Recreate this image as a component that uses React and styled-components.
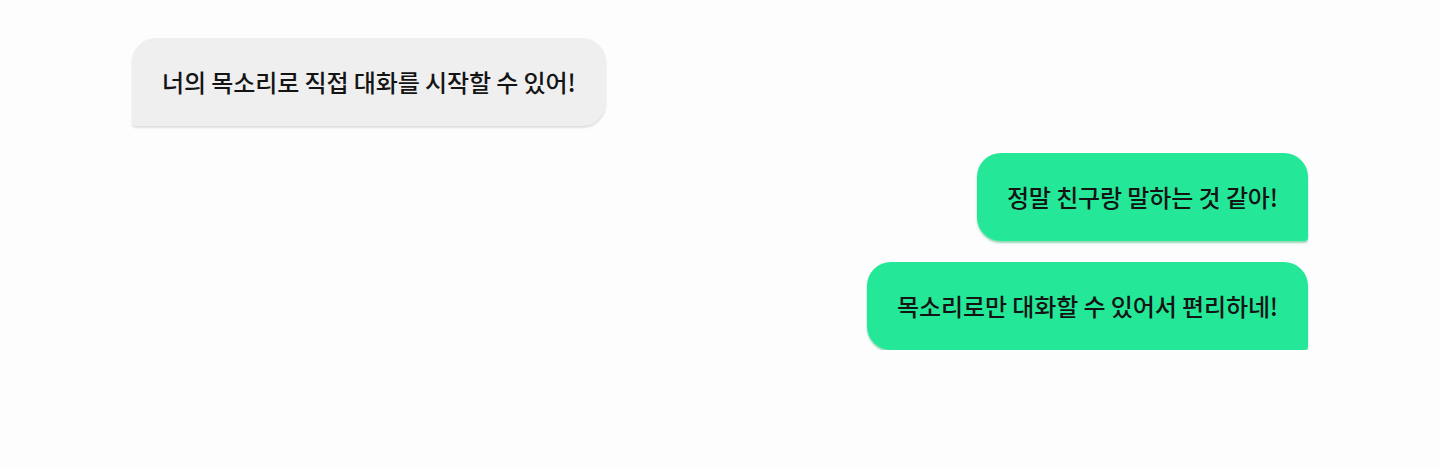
import React from "react";
import styled, { createGlobalStyle } from "styled-components";

const GlobalStyle = createGlobalStyle`
  html, body {
    margin: 0;
    padding: 0;
    background: #fdfdfd;
    font-family: "Noto Sans CJK KR", "Noto Sans", sans-serif;
  }
`;

const Chat = styled.div`
  width: 1176px;
  margin: 0 auto;
  padding-top: 38px;
  display: flex;
  flex-direction: column;
`;

const Row = styled.div`
  display: flex;
  justify-content: ${(props) => (props.mine ? "flex-end" : "flex-start")};
  margin-top: ${(props) => props.gap || 0}px;
`;

const Bubble = styled.div`
  box-sizing: border-box;
  height: 88px;
  padding: 0 30px 1px;
  display: flex;
  align-items: center;
  font-size: 24px;
  font-weight: 500;
  letter-spacing: -0.1px;
  color: #141414;
  background: ${(props) => (props.mine ? "#24e898" : "#efefef")};
  border-radius: ${(props) =>
    props.mine ? "24px 24px 4px 24px" : "24px 24px 24px 4px"};
  box-shadow: 0 2px 2px
    ${(props) => (props.mine ? "rgba(20, 170, 100, 0.45)" : "rgba(0, 0, 0, 0.12)")};
`;

const messages = [
  { text: "너의 목소리로 직접 대화를 시작할 수 있어!", mine: false, gap: 0 },
  { text: "정말 친구랑 말하는 것 같아!", mine: true, gap: 27 },
  { text: "목소리로만 대화할 수 있어서 편리하네!", mine: true, gap: 21 },
];

export default function App() {
  return (
    <>
      <GlobalStyle />
      <Chat>
        {messages.map((m, i) => (
          <Row key={i} mine={m.mine} gap={m.gap}>
            <Bubble mine={m.mine}>{m.text}</Bubble>
          </Row>
        ))}
      </Chat>
    </>
  );
}
